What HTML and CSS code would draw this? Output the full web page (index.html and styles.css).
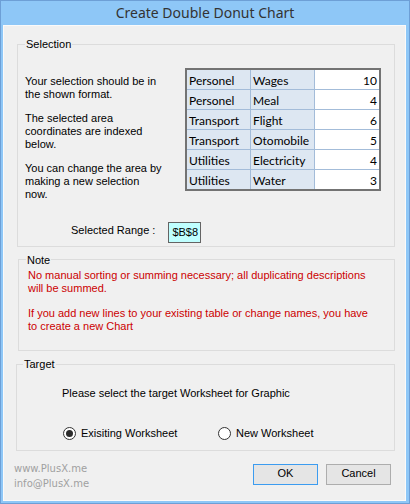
FILE: index.html
```html
<!DOCTYPE html>
<html>
<head>
<meta charset="utf-8">
<link rel="stylesheet" href="styles.css">
</head>
<body>
<div class="window">
  <div class="titlebar">Create Double Donut Chart</div>
  <div class="client">
    <div class="group selection">
      <span class="legend">Selection</span>
      <div class="sel-row">
        <div class="sel-text">
          <p>Your selection should be in<br>the shown format.</p>
          <p>The selected area<br>coordinates are indexed<br>below.</p>
          <p class="last">You can change the area by<br>making a new selection<br>now.</p>
        </div>
        <div class="grid">
          <div class="cell">Personel</div><div class="cell">Wages</div><div class="cell num">10</div>
          <div class="cell">Personel</div><div class="cell">Meal</div><div class="cell num">4</div>
          <div class="cell">Transport</div><div class="cell">Flight</div><div class="cell num">6</div>
          <div class="cell">Transport</div><div class="cell">Otomobile</div><div class="cell num">5</div>
          <div class="cell">Utilities</div><div class="cell">Electricity</div><div class="cell num">4</div>
          <div class="cell">Utilities</div><div class="cell">Water</div><div class="cell num">3</div>
        </div>
      </div>
      <div class="range-row">
        <span class="range-label">Selected Range :</span>
        <span class="range-box">$B$8</span>
      </div>
    </div>

    <div class="group note">
      <span class="legend">Note</span>
      <p>No manual sorting or summing necessary; all duplicating descriptions<br>will be summed.</p>
      <p class="last">If you add new lines to your existing table or change names, you have<br>to create a new Chart</p>
    </div>

    <div class="group target">
      <span class="legend">Target</span>
      <div class="target-text">Please select the target Worksheet for Graphic</div>
      <div class="radios">
        <div class="radio-item first"><span class="circle checked"></span><span>Exisiting Worksheet</span></div>
        <div class="radio-item"><span class="circle"></span><span>New Worksheet</span></div>
      </div>
    </div>

    <div class="footer">
      <div class="links">
        <div>www.PlusX.me</div>
        <div>info@PlusX.me</div>
      </div>
      <div class="buttons">
        <button class="btn default">OK</button>
        <button class="btn">Cancel</button>
      </div>
    </div>
  </div>
</div>
</body>
</html>
```

FILE: styles.css
```css
html, body {
  margin: 0;
  padding: 0;
}

body {
  width: 410px;
  height: 504px;
  overflow: hidden;
  font-family: "Liberation Sans", Arial, sans-serif;
  font-size: 11px;
  line-height: 13px;
  color: #000;
}

.window {
  position: relative;
  width: 410px;
  height: 504px;
  box-sizing: border-box;
  background: #8ec7f7;
  border: 1px solid #6d9fd6;
  display: flex;
  flex-direction: column;
}

.titlebar {
  height: 24px;
  box-sizing: border-box;
  padding-bottom: 2px;
  display: flex;
  align-items: center;
  justify-content: center;
  font-family: "Noto Sans", sans-serif;
  font-size: 14px;
  line-height: 19px;
  color: #333;
}

.client {
  flex: 1;
  margin: 0 3px 2px 2px;
  background: #f0f0f0;
  border: 1px solid #fafafa;
}

.group {
  position: relative;
  box-sizing: border-box;
  border: 1px solid #dcdcdc;
}

.legend {
  position: absolute;
  top: -7px;
  left: 7px;
  padding: 0 1px;
  background: #f0f0f0;
  color: #000;
  white-space: nowrap;
}

p {
  margin: 0 0 11px;
  white-space: nowrap;
}

p.last {
  margin-bottom: 0;
}

/* Selection */
.selection {
  margin: 18px 0 0 13px;
  width: 378px;
  height: 203px;
  padding: 23px 0 0 7px;
}

.sel-row {
  display: flex;
  align-items: flex-start;
}

.sel-text {
  width: 160px;
  padding-top: 7px;
}

.grid {
  display: grid;
  grid-template-columns: 63px 63px 64px;
  grid-auto-rows: 19px;
  gap: 1px;
  background: #a3bcd9;
  border: 2px solid #737373;
  font-family: "Lato", "Open Sans", sans-serif;
  font-size: 12px;
  line-height: 19px;
}

.cell {
  background: #dde7f2;
  padding: 1px 0 0 2px;
  box-sizing: border-box;
  white-space: nowrap;
  overflow: hidden;
}

.cell.num {
  background: #fff;
  text-align: right;
  padding: 1px 2px 0 0;
}

.range-row {
  display: flex;
  align-items: flex-start;
  margin: 21px 0 0 46px;
}

.range-label {
  margin-top: 2px;
  white-space: nowrap;
}

.range-box {
  margin-left: 13px;
  width: 33px;
  height: 21px;
  box-sizing: border-box;
  border: 1px solid #646464;
  background: #bfffff;
  padding: 2px 0 0 3px;
  line-height: 15px;
}

/* Note */
.note {
  margin: 12px 0 0 14px;
  width: 377px;
  height: 92px;
  padding: 9px 0 0 9px;
  color: #cc0000;
}

.note .legend {
  top: -6px;
}

.note p {
  margin-bottom: 12px;
}

.note p.last {
  margin-bottom: 0;
}

/* Target */
.target {
  margin: 13px 0 0 12px;
  width: 379px;
  height: 87px;
  padding: 22px 0 0 45px;
}

.target .legend {
  left: 6px;
}

.radios {
  display: flex;
  align-items: center;
  height: 13px;
  margin: 27px 0 0 1px;
}

.radio-item {
  display: flex;
  align-items: center;
  white-space: nowrap;
}

.radio-item.first {
  width: 155px;
}

.circle {
  width: 13px;
  height: 13px;
  box-sizing: border-box;
  border: 1px solid #333;
  border-radius: 50%;
  background: #fff;
  margin-right: 5px;
  display: flex;
  align-items: center;
  justify-content: center;
}

.circle.checked::after {
  content: "";
  width: 7px;
  height: 7px;
  border-radius: 50%;
  background: #2b2b2b;
}

/* Footer */
.footer {
  display: flex;
  justify-content: space-between;
  align-items: flex-start;
  padding: 0 14px 0 10px;
}

.links {
  margin-top: 10px;
  font-family: "DejaVu Sans", Verdana, sans-serif;
  font-size: 10px;
  line-height: 15px;
  color: #a0a0a0;
}

.buttons {
  display: flex;
  gap: 8px;
  margin-top: 13px;
}

.btn {
  width: 65px;
  height: 21px;
  box-sizing: border-box;
  margin: 0;
  padding: 0 0 2px;
  border: 1px solid #adadad;
  background: #e5e5e5;
  font-family: "Liberation Sans", Arial, sans-serif;
  font-size: 11px;
  line-height: 13px;
  color: #000;
  display: flex;
  align-items: center;
  justify-content: center;
}

.btn.default {
  border-color: #3c9cf0;
}
```
